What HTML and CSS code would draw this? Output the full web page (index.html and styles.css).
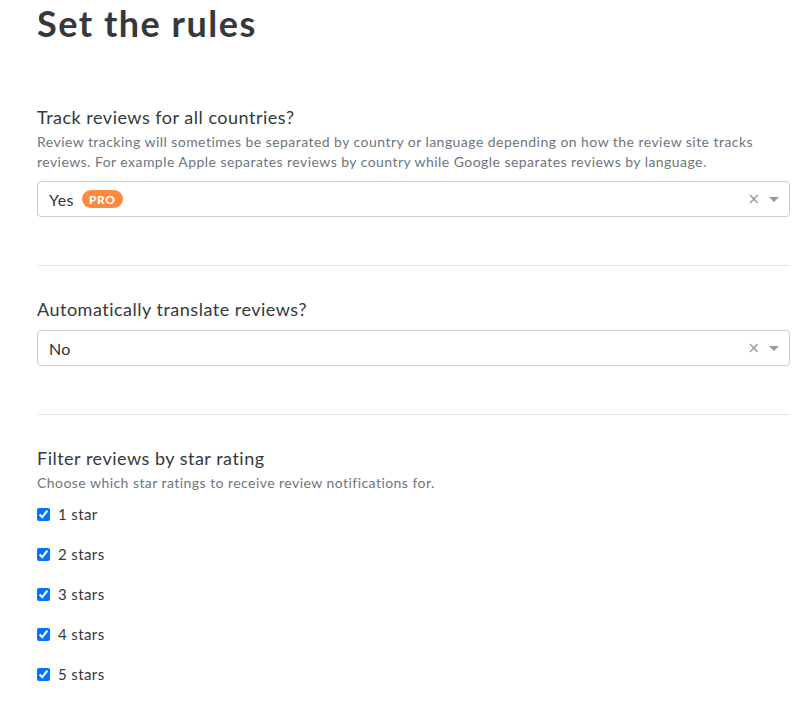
FILE: index.html
```html
<!DOCTYPE html>
<html>
<head>
<meta charset="utf-8">
<link rel="stylesheet" href="styles.css">
</head>
<body>
<main class="page">
  <h1 class="title">Set the rules</h1>

  <section class="rule">
    <h2 class="label">Track reviews for all countries?</h2>
    <p class="desc">Review tracking will sometimes be separated by country or language depending on how the review site tracks reviews. For example Apple separates reviews by country while Google separates reviews by language.</p>
    <div class="select">
      <span class="value">Yes <span class="badge">PRO</span></span>
      <span class="controls"><span class="clear">×</span><span class="arrow"></span></span>
    </div>
  </section>

  <hr class="divider">

  <section class="rule">
    <h2 class="label">Automatically translate reviews?</h2>
    <div class="select">
      <span class="value">No</span>
      <span class="controls"><span class="clear">×</span><span class="arrow"></span></span>
    </div>
  </section>

  <hr class="divider">

  <section class="rule">
    <h2 class="label">Filter reviews by star rating</h2>
    <p class="desc">Choose which star ratings to receive review notifications for.</p>
    <ul class="checks">
      <li><label class="check"><input type="checkbox" checked> 1 star</label></li>
      <li><label class="check"><input type="checkbox" checked> 2 stars</label></li>
      <li><label class="check"><input type="checkbox" checked> 3 stars</label></li>
      <li><label class="check"><input type="checkbox" checked> 4 stars</label></li>
      <li><label class="check"><input type="checkbox" checked> 5 stars</label></li>
    </ul>
  </section>
</main>
</body>
</html>
```

FILE: styles.css
```css
* { box-sizing: border-box; }
html, body { margin: 0; padding: 0; background: #fff; }
body {
  font-family: "Lato", "Open Sans", sans-serif;
  color: #35383c;
}
.page {
  padding: 0 18px 0 37px;
}
.title {
  margin: 0;
  padding-top: 1px;
  font-size: 36px;
  line-height: 44px;
  font-weight: 700;
  letter-spacing: 1.5px;
  color: #35383c;
}
.title + .rule { margin-top: 61px; }
.label {
  margin: 0;
  font-size: 18px;
  line-height: 22px;
  font-weight: 400;
  color: #35383c;
  letter-spacing: 0.5px;
}
.desc {
  margin: 4px 0 0;
  font-size: 14px;
  line-height: 20px;
  color: #6e7580;
  letter-spacing: 0.45px;
}
.select {
  margin-top: 9px;
  height: 36px;
  border: 1px solid #cccccc;
  border-radius: 4px;
  display: flex;
  align-items: center;
  justify-content: space-between;
  padding: 0 10px 0 11px;
  font-size: 16px;
  color: #333;
  letter-spacing: 0.4px;
}
.label + .select { margin-top: 10px; }
.value { display: flex; align-items: center; gap: 8px; }
.badge {
  display: inline-flex;
  align-items: center;
  justify-content: center;
  background: #ff8a3d;
  color: #fff;
  font-size: 12px;
  font-weight: 700;
  height: 18px;
  width: 41px;
  border-radius: 9px;
  letter-spacing: 0.6px;
}
.controls { display: flex; align-items: center; gap: 9px; }
.clear { color: #999; font-size: 15px; line-height: 1; font-family: "DejaVu Sans", sans-serif; letter-spacing: 0; }
.arrow {
  width: 0; height: 0;
  border-left: 5px solid transparent;
  border-right: 5px solid transparent;
  border-top: 5px solid #999;
}
.divider {
  margin: 48px 0 0;
  border: 0;
  border-top: 1px solid #e3e8ee;
  height: 0;
}
.divider + .rule { margin-top: 32px; }
.checks {
  list-style: none;
  margin: 11px 0 0;
  padding: 0;
  display: flex;
  flex-direction: column;
  gap: 20px;
}
.check {
  display: flex;
  align-items: center;
  gap: 8px;
  font-size: 15px;
  line-height: 20px;
  color: #35383c;
  letter-spacing: 0.4px;
}
.check input {
  margin: 0;
  width: 13px;
  height: 13px;
}
```
